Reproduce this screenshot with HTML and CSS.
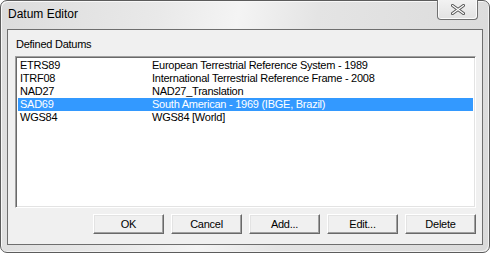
FILE: index.html
```html
<!DOCTYPE html>
<html lang="en">
<head>
  <meta charset="UTF-8">
  <title>Datum Editor</title>
  <link rel="stylesheet" href="styles.css">
</head>
<body>

<div class="window">
  <div class="titlebar">
    <span class="title">Datum Editor</span>
    <button class="close" title="Close">
      <svg width="14" height="11" viewBox="0 0 14 11">
        <path d="M1.5 1.5 L12.5 9.5 M12.5 1.5 L1.5 9.5" stroke="#555" stroke-width="3" stroke-linecap="round" fill="none"/>
        <path d="M1.5 1.5 L12.5 9.5 M12.5 1.5 L1.5 9.5" stroke="#fff" stroke-width="1.2" stroke-linecap="round" fill="none"/>
      </svg>
    </button>
  </div>

  <div class="client">
    <div class="group-label">Defined Datums</div>

    <div class="listbox">
      <div class="row"><span class="name">ETRS89</span><span class="desc">European Terrestrial Reference System - 1989</span></div>
      <div class="row"><span class="name">ITRF08</span><span class="desc">International Terrestrial Reference Frame - 2008</span></div>
      <div class="row"><span class="name">NAD27</span><span class="desc">NAD27_Translation</span></div>
      <div class="row selected"><span class="name">SAD69</span><span class="desc">South American - 1969 (IBGE, Brazil)</span></div>
      <div class="row"><span class="name">WGS84</span><span class="desc">WGS84 [World]</span></div>
    </div>

    <div class="buttons">
      <button class="btn">OK</button>
      <button class="btn">Cancel</button>
      <button class="btn">Add...</button>
      <button class="btn">Edit...</button>
      <button class="btn">Delete</button>
    </div>
  </div>
</div>

</body>
</html>
```

FILE: styles.css
```css
* {
  box-sizing: border-box;
}

body {
  margin: 0;
  padding: 0;
  background: #ffffff;
  font-family: 'Liberation Sans', Arial, sans-serif;
  font-size: 11px;
  color: #000000;
}

.window {
  width: 490px;
  height: 253px;
  border: 1px solid #5c5c5c;
  border-radius: 7px;
  background: linear-gradient(100deg, #dcdcdc 0%, #e9e9e9 30%, #f4f4f4 45%, #e4e4e4 60%, #dadada 100%);
  box-shadow: inset 1px 1px 0 #f8f8f8, inset -1px -1px 0 #f2f2f2;
  display: flex;
  flex-direction: column;
}

.titlebar {
  height: 28px;
  display: flex;
  align-items: flex-start;
  justify-content: space-between;
  padding-left: 7px;
}

.title {
  font-size: 12px;
  margin-top: 6px;
  color: #000000;
}

.close {
  width: 41px;
  height: 20px;
  margin-right: 11px;
  margin-top: -1px;
  border: 1px solid #707070;
  border-top: none;
  border-radius: 0 0 4px 4px;
  background: linear-gradient(#f2f2f2, #e2e2e2);
  box-shadow: inset 1px 0 0 #fbfbfb, inset -1px -1px 0 #fbfbfb;
  padding: 0;
  display: flex;
  align-items: center;
  justify-content: center;
}

.client {
  flex: 1;
  margin: 0 6px 7px 6px;
  border: 1px solid #6e6e6e;
  background: #f0f0f0;
  padding: 0 6px 0 7px;
  display: flex;
  flex-direction: column;
  letter-spacing: -0.25px;
}

.group-label {
  margin-top: 8px;
  height: 18px;
  padding-left: 1px;
}

.listbox {
  height: 152px;
  background: #ffffff;
  border: 1px solid;
  border-color: #a0a0a0 #ffffff #ffffff #a0a0a0;
  box-shadow: inset 1px 1px 0 #696969, inset -1px -1px 0 #e3e3e3;
  padding: 2px 2px;
}

.row {
  height: 13px;
  line-height: 13px;
  display: flex;
  white-space: nowrap;
}

.row .name {
  width: 134px;
  padding-left: 2px;
}

.row.selected {
  background: #3399ff;
  color: #ffffff;
}

.buttons {
  display: flex;
  justify-content: flex-end;
  gap: 7px;
  margin-top: 6px;
}

.btn {
  width: 71px;
  height: 20px;
  padding: 0;
  font-family: 'Liberation Sans', Arial, sans-serif;
  font-size: 11px;
  letter-spacing: -0.25px;
  color: #000000;
  background: #f0f0f0;
  border: 1px solid;
  border-color: #ffffff #696969 #696969 #ffffff;
  box-shadow: inset -1px -1px 0 #a0a0a0, inset 1px 1px 0 #e3e3e3;
}
```
